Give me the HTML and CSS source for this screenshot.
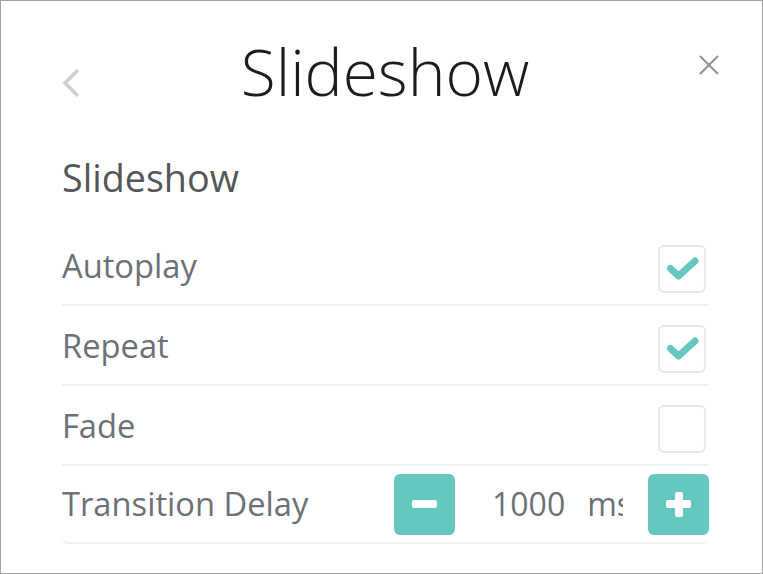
FILE: index.html
```html
<!DOCTYPE html>
<html>
<head>
<meta charset="utf-8">
<link rel="stylesheet" href="styles.css">
</head>
<body>
<div class="frame">
  <header class="header">
    <button class="back" aria-label="Back">
      <svg width="20" height="32" viewBox="0 0 20 32"><path d="M16 3 L3 16 L16 29" fill="none" stroke="#cfcfcf" stroke-width="3.5"/></svg>
    </button>
    <h1 class="title">Slideshow</h1>
    <button class="close" aria-label="Close">
      <svg width="20" height="20" viewBox="0 0 20 20"><path d="M1 1 L19 19 M19 1 L1 19" fill="none" stroke="#8d9298" stroke-width="2"/></svg>
    </button>
  </header>
  <section class="content">
    <h2 class="heading">Slideshow</h2>
    <div class="row">
      <span class="label">Autoplay</span>
      <span class="check on"><svg width="48" height="48" viewBox="0 0 48 48"><path d="M12.5 23.5 L20.5 31 L37 16" fill="none" stroke="#64c8bf" stroke-width="7" stroke-linecap="round" stroke-linejoin="round"/></svg></span>
    </div>
    <div class="row">
      <span class="label">Repeat</span>
      <span class="check on"><svg width="48" height="48" viewBox="0 0 48 48"><path d="M12.5 23.5 L20.5 31 L37 16" fill="none" stroke="#64c8bf" stroke-width="7" stroke-linecap="round" stroke-linejoin="round"/></svg></span>
    </div>
    <div class="row">
      <span class="label">Fade</span>
      <span class="check"></span>
    </div>
    <div class="row last">
      <span class="label">Transition Delay</span>
      <div class="stepper">
        <button class="step"><span class="bar"></span></button>
        <div class="value"><span>1000</span><span class="unit">ms</span></div>
        <button class="step"><span class="bar"></span><span class="bar vert"></span></button>
      </div>
    </div>
  </section>
</div>
</body>
</html>
```
FILE: styles.css
```css
* { box-sizing: border-box; }
html, body { margin: 0; padding: 0; background: #fff; }
body { font-family: "Open Sans", "Noto Sans", sans-serif; }
.frame {
  width: 763px;
  height: 574px;
  border: 1px solid #a3a3a3;
  overflow: hidden;
}
.header {
  display: grid;
  grid-template-columns: 1fr auto 1fr;
  padding: 39px 43px 0 61px;
}
.back, .close, .step {
  border: 0;
  background: none;
  padding: 0;
  margin: 0;
  cursor: pointer;
}
.back { justify-self: start; margin-top: 27px; height: 32px; width: 20px; display: block; }
.back svg, .close svg { display: block; }
.close { justify-self: end; margin-top: 15px; width: 20px; height: 20px; align-self: start; }
.title {
  margin: 0 11px 0 0;
  font-size: 64px;
  line-height: 64px;
  font-weight: 300;
  color: #1c1c1c;
}
.content {
  padding: 55px 54px 0 61px;
}
.heading {
  margin: 0;
  font-size: 37.7px;
  line-height: 38px;
  font-weight: 400;
  color: #545759;
  padding-bottom: 29px;
}
.row {
  display: flex;
  align-items: center;
  justify-content: space-between;
  height: 80px;
  padding-top: 8px;
  border-bottom: 2px solid #efefef;
}
.label {
  font-size: 32.7px;
  line-height: 32px;
  color: #6b7176;
  margin-bottom: 7px;
}
.check {
  width: 48px;
  height: 48px;
  border: 2px solid #e8e8e8;
  border-radius: 6px;
  margin-right: 2px;
  position: relative;
}
.check svg { position: absolute; left: -2px; top: -2px; display: block; }
.row.last {
  height: 78px;
  padding-top: 0;
  border-bottom-left-radius: 6px;
  border-bottom-right-radius: 6px;
}
.row.last .label { margin-bottom: 0; }
.stepper {
  display: flex;
  align-items: center;
  margin-right: -1px;
}
.step {
  width: 61px;
  height: 61px;
  background: #64c8bf;
  border-radius: 6px;
  position: relative;
  display: flex;
  align-items: center;
  justify-content: center;
}
.bar {
  position: absolute;
  width: 25px;
  height: 8px;
  border-radius: 2px;
  background: #fff;
}
.bar.vert { width: 8px; height: 25px; }
.value {
  width: 168px;
  margin-right: 25px;
  padding-left: 37px;
  overflow: hidden;
  white-space: nowrap;
  font-size: 32px;
  line-height: 40px;
  color: #6b7176;
}
.unit { margin-left: 22px; }
```
